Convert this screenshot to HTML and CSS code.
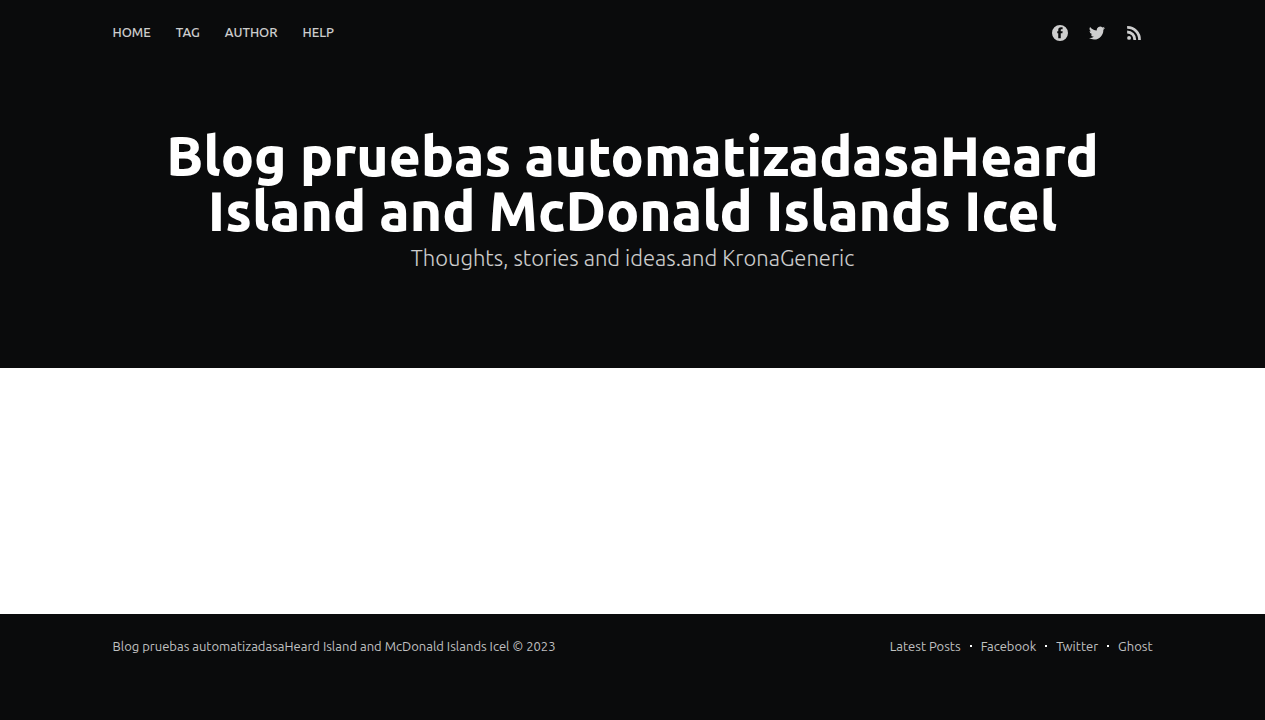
FILE: index.html
```html
<!DOCTYPE html>
<html lang="en">
<head>
<meta charset="utf-8">
<meta name="viewport" content="width=device-width, initial-scale=1">
<title>Blog pruebas automatizadasaHeard Island and McDonald Islands Icel</title>
<link rel="stylesheet" href="styles.css">
</head>
<body>
<header class="site-header">
  <div class="inner">
    <nav class="site-nav" aria-label="Main">
      <ul class="nav">
        <li><a href="#home">Home</a></li>
        <li><a href="#tag">Tag</a></li>
        <li><a href="#author">Author</a></li>
        <li><a href="#help">Help</a></li>
      </ul>
      <div class="social-links">
        <a href="#facebook" aria-label="Facebook"><svg viewBox="0 0 32 32"><path fill-rule="evenodd" d="M16 0a16 16 0 1 0 0 32 16 16 0 0 0 0-32zm-3.500 26.500V16.500H10.500V12.300h2V10c0-3.800 1.900-5.700 5.700-5.700h3v4.200h-2c-1.400 0-1.700.6-1.700 1.600v2.200h3.800l-.5 4.200H17.500V26.500z"/></svg></a>
        <a href="#twitter" aria-label="Twitter"><svg viewBox="0 0 32 32"><path d="M32 6.100a13 13 0 0 1-3.800 1 6.600 6.600 0 0 0 2.900-3.600 13 13 0 0 1-4.200 1.600 6.600 6.600 0 0 0-11.200 6A18.700 18.700 0 0 1 2.200 4.200a6.600 6.600 0 0 0 2 8.800 6.500 6.500 0 0 1-3-.8v.1a6.600 6.600 0 0 0 5.300 6.400 6.600 6.600 0 0 1-3 .1 6.600 6.600 0 0 0 6.200 4.600A13.200 13.200 0 0 1 0 26.100a18.600 18.600 0 0 0 10 2.900c12.200 0 18.700-10 18.700-18.700v-.9A13 13 0 0 0 32 6.100z"/></svg></a>
        <a href="#rss" aria-label="RSS"><svg viewBox="0 0 24 24"><circle cx="4.600" cy="19.400" r="2.900"/><path d="M1.700 8.400v4.200a9.400 9.400 0 0 1 9.400 9.800h4.200A13.600 13.600 0 0 0 1.700 8.400zm0-6.800v4A16.100 16.100 0 0 1 18.200 22.400h4.100A20.100 20.100 0 0 0 1.700 1.600z"/></svg></a>
      </div>
    </nav>
    <div class="header-content">
      <h1 class="site-title">Blog pruebas automatizadasaHeard Island and McDonald Islands Icel</h1>
      <p class="site-description">Thoughts, stories and ideas.and KronaGeneric</p>
    </div>
  </div>
</header>
<main class="site-main"></main>
<footer class="site-footer">
  <div class="inner footer-content">
    <section><a href="#home">Blog pruebas automatizadasaHeard Island and McDonald Islands Icel</a> © 2023</section>
    <nav class="footer-nav" aria-label="Footer">
      <a href="#latest">Latest Posts</a>
      <a href="#facebook">Facebook</a>
      <a href="#twitter">Twitter</a>
      <a href="#ghost">Ghost</a>
    </nav>
  </div>
</footer>
</body>
</html>
```
FILE: styles.css
```css
* {
  box-sizing: border-box;
}

body {
  display: flex;
  flex-direction: column;
  min-height: 100vh;
  margin: 0;
  background: #fff;
  font-family: Ubuntu, "Noto Sans", "Open Sans", sans-serif;
}

a {
  color: inherit;
  text-decoration: none;
}

.site-header {
  padding: 0 4vw;
  background: #0a0b0c;
  color: #fff;
}

.inner {
  width: 100%;
  max-width: 1040px;
  margin: 0 auto;
}

.site-nav {
  display: flex;
  align-items: center;
  justify-content: space-between;
  height: 66px;
}

.nav {
  display: flex;
  gap: 25px;
  margin: 0;
  padding: 0 0 2px;
  list-style: none;
  font-size: 13px;
  font-weight: 500;
  line-height: 18px;
  text-transform: uppercase;
  opacity: 0.8;
}

.social-links {
  display: flex;
  gap: 21px;
  padding-right: 11px;
  opacity: 0.8;
}

.social-links svg {
  display: block;
  width: 16px;
  height: 16px;
  fill: #fff;
}

.header-content {
  padding: 62px 0 93px;
  text-align: center;
}

.site-title {
  margin: 0;
  font-size: 55px;
  font-weight: 800;
  line-height: 55px;
}

.site-description {
  margin: 0;
  padding-top: 3px;
  font-size: 22px;
  font-weight: 300;
  line-height: 34px;
  opacity: 0.8;
}

.site-main {
  flex: 1;
}

.site-footer {
  padding: 20px 4vw 62px;
  background: #0a0b0c;
  color: rgba(255, 255, 255, 0.75);
  font-size: 13px;
  line-height: 24px;
}

.footer-content {
  display: flex;
  flex-wrap: wrap;
  justify-content: space-between;
}

.footer-nav {
  display: flex;
}

.footer-nav a {
  display: flex;
  align-items: center;
}

.footer-nav a + a::before {
  content: "";
  width: 2px;
  height: 2px;
  margin: 0 9px;
  background: #fff;
}
```
